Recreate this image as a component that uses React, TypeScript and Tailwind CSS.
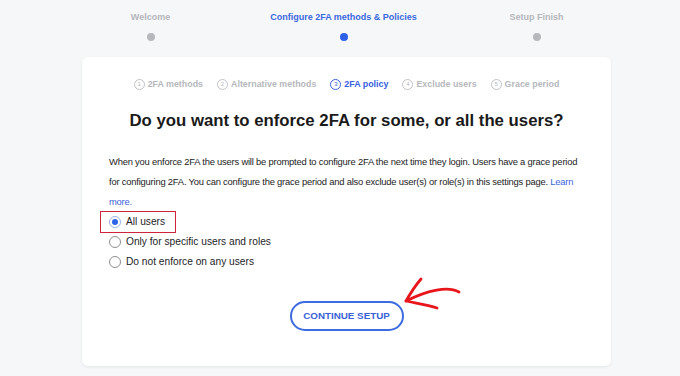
import React from "react";

const font = { fontFamily: "'Liberation Sans', Arial, sans-serif" };

const topSteps = [
  { label: "Welcome", active: false },
  { label: "Configure 2FA methods & Policies", active: true },
  { label: "Setup Finish", active: false },
];

const subSteps = ["2FA methods", "Alternative methods", "2FA policy", "Exclude users", "Grace period"];

function Radio({ checked, label, boxed }: { checked?: boolean; label: string; boxed?: boolean }) {
  return (
    <label
      className={
        "flex items-center gap-[5px] text-[10.2px] text-[#1d1d1f] " +
        (boxed ? "h-[22px] -my-[1px] border border-[#d0243a] w-[76px] -ml-[9px] pl-[8px]" : "h-[20px]")
      }
    >
      <span
        className={
          "w-[12px] h-[12px] rounded-full border bg-white flex items-center justify-center shrink-0 " +
          (checked ? "border-[#9bb4ec]" : "border-[#8e8e8e]")
        }
      >
        {checked && <span className="w-[6px] h-[6px] rounded-full bg-[#2e64e8]" />}
      </span>
      {label}
    </label>
  );
}

export default function App() {
  return (
    <div className="w-[680px] h-[376px] bg-[#f6f7f9] overflow-hidden relative" style={font}>
      <div className="grid grid-cols-3 w-[579px] ml-[54px] pt-[11px]">
        {topSteps.map((s) => (
          <div key={s.label} className="flex flex-col items-center gap-[10px]">
            <span className={"text-[9px] leading-[12px] font-bold " + (s.active ? "text-[#3a68dd]" : "text-[#b4b6bb]")}>
              {s.label}
            </span>
            <span className={"w-[8px] h-[8px] rounded-full " + (s.active ? "bg-[#2e5fe6]" : "bg-[#b7b8bc]")} />
          </div>
        ))}
      </div>

      <div className="ml-[82px] mt-[16px] w-[529px] h-[309px] bg-white rounded-[6px] shadow-[0_1px_3px_rgba(0,0,0,0.08)] pl-[27px] pr-[20px]">
        <div className="flex items-center justify-center gap-[14px] pt-[22px] pr-[7px] text-[8.9px] leading-[11px] font-bold">
          {subSteps.map((s, i) => {
            const active = i === 2;
            return (
              <span key={s} className={"flex items-center gap-[3px] " + (active ? "text-[#3760dd]" : "text-[#b6b8bc]")}>
                <span
                  className={
                    "w-[11px] h-[11px] rounded-full border flex items-center justify-center text-[6px] font-normal " +
                    (active ? "border-[#3760dd]" : "border-[#c0c2c6]")
                  }
                >
                  {i + 1}
                </span>
                {s}
              </span>
            );
          })}
        </div>

        <h1 className="text-center text-[16.75px] leading-[20px] font-bold text-[#1a1a1a] mt-[21px] pr-[7px]">
          Do you want to enforce 2FA for some, or all the users?
        </h1>

        <p className="text-[9.4px] tracking-[-0.2px] leading-[20px] text-[#222] mt-[21px] mr-[13px]">
          When you enforce 2FA the users will be prompted to configure 2FA the next time they login. Users have a grace
          period for configuring 2FA. You can configure the grace period and also exclude user(s) or role(s) in this
          settings page. <span className="text-[#3b63d8]">Learn more.</span>
        </p>

        <div className="flex flex-col">
          <Radio checked boxed label="All users" />
          <Radio label="Only for specific users and roles" />
          <Radio label="Do not enforce on any users" />
        </div>

        <div className="flex justify-center mt-[29px] pr-[7px]">
          <button className="w-[114px] h-[30px] rounded-full border-2 border-[#3d6be0] text-[#3a62d6] text-[9.8px] font-bold">
            CONTINUE SETUP
          </button>
        </div>
      </div>

      <svg className="absolute left-[398px] top-[272px]" width="70" height="42" viewBox="0 0 70 42" fill="none">
        <path d="M61 20 C 50 14, 30 18, 8 29" stroke="#e8151b" strokeWidth="2.8" strokeLinecap="round" />
        <path d="M23 7 C 17 14, 12 22, 8 29 C 17 31, 30 33, 39 36" stroke="#e8151b" strokeWidth="2.8" strokeLinecap="round" strokeLinejoin="round" />
      </svg>
    </div>
  );
}
